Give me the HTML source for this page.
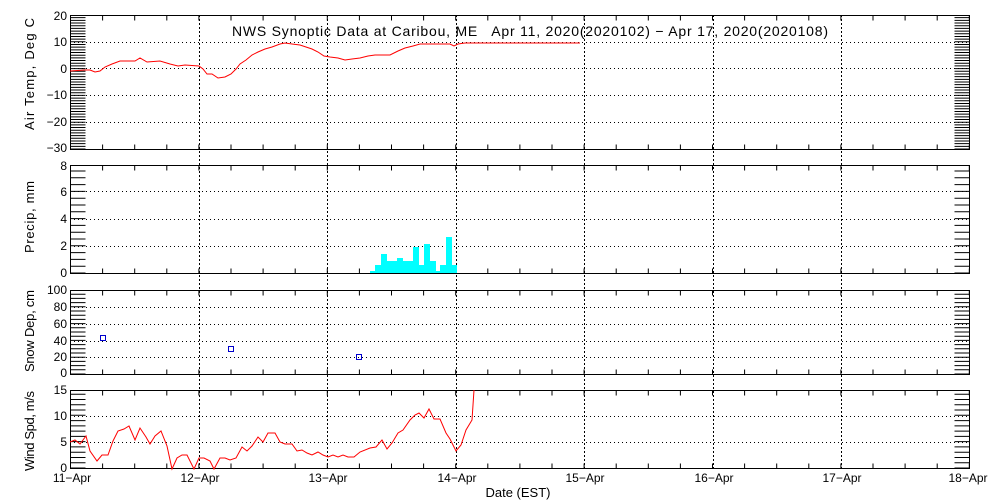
<!DOCTYPE html>
<html><head><meta charset="utf-8"><style>
html,body{margin:0;padding:0;background:#fff;}
svg{display:block;font-family:"Liberation Sans",sans-serif;}
</style></head><body>
<svg width="1000" height="500" viewBox="0 0 1000 500" xmlns="http://www.w3.org/2000/svg">
<rect width="1000" height="500" fill="#fff"/>
<g stroke="#000" fill="none" stroke-width="1">
<rect x="70.5" y="15.5" width="899" height="134"/>
<rect x="70.5" y="165.5" width="899" height="108"/>
<rect x="70.5" y="290.5" width="899" height="84"/>
<rect x="70.5" y="390.5" width="899" height="78"/>
</g>
<g stroke="#000" fill="none" stroke-width="15">
<line x1="78" y1="149.5" x2="78" y2="15" stroke-dasharray="1 1.68"/>
<line x1="962" y1="149.5" x2="962" y2="15" stroke-dasharray="1 1.68"/>
<line x1="78" y1="273.5" x2="78" y2="165" stroke-dasharray="1 5.8"/>
<line x1="962" y1="273.5" x2="962" y2="165" stroke-dasharray="1 5.8"/>
<line x1="78" y1="374.5" x2="78" y2="290" stroke-dasharray="1 3.2"/>
<line x1="962" y1="374.5" x2="962" y2="290" stroke-dasharray="1 3.2"/>
<line x1="78" y1="468.5" x2="78" y2="390" stroke-dasharray="1 4.27"/>
<line x1="962" y1="468.5" x2="962" y2="390" stroke-dasharray="1 4.27"/>
</g>
<g stroke="#000" stroke-width="1" stroke-dasharray="1 3">
<line x1="70" y1="42.5" x2="970" y2="42.5"/>
<line x1="70" y1="68.5" x2="970" y2="68.5"/>
<line x1="70" y1="95.5" x2="970" y2="95.5"/>
<line x1="70" y1="122.5" x2="970" y2="122.5"/>
<line x1="70" y1="191.5" x2="970" y2="191.5"/>
<line x1="70" y1="219.5" x2="970" y2="219.5"/>
<line x1="70" y1="246.5" x2="970" y2="246.5"/>
<line x1="70" y1="307.5" x2="970" y2="307.5"/>
<line x1="70" y1="324.5" x2="970" y2="324.5"/>
<line x1="70" y1="341.5" x2="970" y2="341.5"/>
<line x1="70" y1="357.5" x2="970" y2="357.5"/>
<line x1="70" y1="416.5" x2="970" y2="416.5"/>
<line x1="70" y1="442.5" x2="970" y2="442.5"/>
</g>
<g stroke="#000" stroke-width="1" stroke-dasharray="2 2">
<line x1="199.5" y1="15" x2="199.5" y2="469"/>
<line x1="327.5" y1="15" x2="327.5" y2="469"/>
<line x1="456.5" y1="15" x2="456.5" y2="469"/>
<line x1="584.5" y1="15" x2="584.5" y2="469"/>
<line x1="713.5" y1="15" x2="713.5" y2="469"/>
<line x1="841.5" y1="15" x2="841.5" y2="469"/>
</g>
<g stroke="#000" stroke-width="5" fill="none">
<line x1="70" y1="18" x2="970" y2="18" stroke-dasharray="1 31.1" stroke-dashoffset="-32.1"/>
<line x1="70" y1="147" x2="970" y2="147" stroke-dasharray="1 31.1" stroke-dashoffset="-32.1"/>
<line x1="70" y1="168" x2="970" y2="168" stroke-dasharray="1 31.1" stroke-dashoffset="-32.1"/>
<line x1="70" y1="271" x2="970" y2="271" stroke-dasharray="1 31.1" stroke-dashoffset="-32.1"/>
<line x1="70" y1="293" x2="970" y2="293" stroke-dasharray="1 31.1" stroke-dashoffset="-32.1"/>
<line x1="70" y1="372" x2="970" y2="372" stroke-dasharray="1 31.1" stroke-dashoffset="-32.1"/>
<line x1="70" y1="393" x2="970" y2="393" stroke-dasharray="1 31.1" stroke-dashoffset="-32.1"/>
<line x1="70" y1="466" x2="970" y2="466" stroke-dasharray="1 31.1" stroke-dashoffset="-32.1"/>
</g>
<polyline fill="none" stroke="#f00" stroke-width="1" points="70,71 85,70 90,70 95,72 100,71 105,67 112,64 120,61 135,61 140,58 147,62 160,61 170,64 178,66 185,65 199,66 203,69 207,74 212,74 218,78 225,77 231,74 236,69 240,64 246,60 252,55 258,52 265,49 272,47 280,44 285,43 292,44 300,45 306,47 312,49 318,52 324,56 330,57 338,58 345,60 352,59 360,58 368,56 375,55 390,55 398,51 405,48 413,46 420,44 440,44 450,44 454,46 458,44 465,43 580,43"/>
<g fill="#0ff">
<rect x="370" y="271" width="5" height="3"/>
<rect x="375" y="265" width="6" height="9"/>
<rect x="381" y="254" width="6" height="20"/>
<rect x="387" y="261" width="10" height="13"/>
<rect x="397" y="258" width="6" height="16"/>
<rect x="403" y="261" width="10" height="13"/>
<rect x="413" y="247" width="6" height="27"/>
<rect x="419" y="265" width="5" height="9"/>
<rect x="424" y="244" width="6" height="30"/>
<rect x="430" y="261" width="6" height="13"/>
<rect x="436" y="271" width="4" height="3"/>
<rect x="440" y="265" width="6" height="9"/>
<rect x="446" y="237" width="6" height="37"/>
<rect x="452" y="265" width="5" height="9"/>
</g>
<line x1="70" y1="273.5" x2="970" y2="273.5" stroke="#000"/>
<g fill="none" stroke="#00c" stroke-width="1">
<rect x="100.5" y="335.5" width="5" height="5"/>
<rect x="228.5" y="346.5" width="5" height="5"/>
<rect x="356.5" y="354.5" width="5" height="5"/>
</g>
<polyline fill="none" stroke="#f00" stroke-width="1" points="70,442 75,440 80,444 86,436 90,451 97,461 102,455 108,455 113,441 118,431 124,429 129,426 135,440 140,428 146,437 150,444 155,436 161,431 167,446 172,469 177,458 182,455 187,455 194,469 199,458 204,458 210,461 214,469 220,458 225,458 230,460 236,458 242,447 247,451 252,446 258,437 263,442 268,433 275,433 280,442 285,444 292,444 297,451 302,450 307,453 312,455 318,452 323,455 328,457 333,455 338,457 343,455 348,457 354,457 360,452 370,448 376,447 382,440 387,449 392,443 398,433 403,430 410,420 415,415 419,413 424,418 429,409 434,419 440,419 446,433 450,439 456,451 461,445 466,430 472,420 474,390"/>
<text x="232" y="36" font-size="14" fill="#000" xml:space="preserve" style="white-space:pre" textLength="596" lengthAdjust="spacing">NWS Synoptic Data at Caribou, ME   Apr 11, 2020(2020102) − Apr 17, 2020(2020108)</text>
<g font-size="12" fill="#000" text-anchor="end">
<text x="67" y="20">20</text><text x="67" y="46">10</text><text x="67" y="73">0</text>
<text x="67" y="99">−10</text><text x="67" y="126">−20</text><text x="67" y="152">−30</text>
<text x="67" y="170">8</text><text x="67" y="196">6</text><text x="67" y="223">4</text><text x="67" y="250">2</text><text x="67" y="277">0</text>
<text x="67" y="294">100</text><text x="67" y="311">80</text><text x="67" y="328">60</text><text x="67" y="345">40</text><text x="67" y="361">20</text><text x="67" y="377">0</text>
<text x="67" y="394">15</text><text x="67" y="420">10</text><text x="67" y="446">5</text><text x="67" y="472">0</text>
</g>
<g font-size="13" fill="#000" text-anchor="middle">
<text transform="translate(34,74) rotate(-90)" textLength="112" lengthAdjust="spacing">Air Temp, Deg C</text>
<text transform="translate(34,217) rotate(-90)" textLength="72" lengthAdjust="spacing">Precip, mm</text>
<text transform="translate(34,331) rotate(-90)" textLength="82" lengthAdjust="spacing">Snow Dep, cm</text>
<text transform="translate(34,431) rotate(-90)" textLength="80" lengthAdjust="spacing">Wind Spd, m/s</text>
</g>
<g font-size="12" fill="#000" text-anchor="middle">
<text x="72" y="482">11−Apr</text><text x="200" y="482">12−Apr</text><text x="328" y="482">13−Apr</text><text x="457" y="482">14−Apr</text>
<text x="585" y="482">15−Apr</text><text x="714" y="482">16−Apr</text><text x="842" y="482">17−Apr</text><text x="968" y="482">18−Apr</text>
</g>
<text x="518" y="497" font-size="13" text-anchor="middle" fill="#000">Date (EST)</text>
</svg>
</body></html>
